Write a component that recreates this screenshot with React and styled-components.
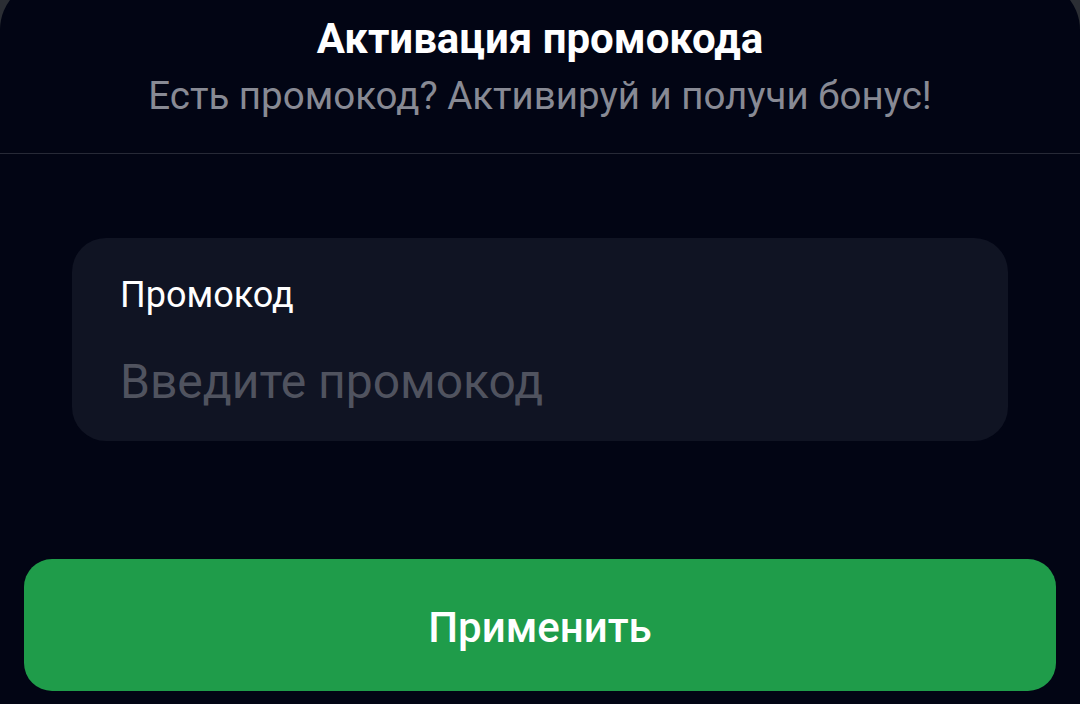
import React, { useState } from 'react'
import styled, { createGlobalStyle } from 'styled-components'

const GlobalStyle = createGlobalStyle`
  html, body {
    margin: 0;
    padding: 0;
    background: #2b2e34;
    font-family: Roboto, "Liberation Sans", sans-serif;
    overflow: hidden;
  }
  * {
    box-sizing: border-box;
  }
`

const Sheet = styled.div`
  margin-top: -20px;
  padding-top: 34px;
  min-height: 724px;
  background: #020514;
  border-radius: 50px 50px 0 0;
  display: flex;
  flex-direction: column;
`

const Header = styled.header`
  display: flex;
  flex-direction: column;
  align-items: center;
  gap: 10px;
  padding-bottom: 35px;
  border-bottom: 1px solid #272a37;
`

const Title = styled.h1`
  margin: 0;
  font-size: 42px;
  line-height: 50px;
  font-weight: 700;
  color: #ffffff;
`

const Subtitle = styled.p`
  margin: 0;
  font-size: 38.5px;
  line-height: 44px;
  font-weight: 400;
  color: #888a94;
`

const Body = styled.div`
  display: flex;
  flex-direction: column;
  padding: 84px 24px 0;
`

const Field = styled.label`
  display: flex;
  flex-direction: column;
  gap: 38px;
  margin: 0 48px;
  padding: 36px 48px 31px;
  background: #101423;
  border-radius: 34px;
`

const FieldLabel = styled.span`
  font-size: 36px;
  line-height: 42px;
  color: #ffffff;
`

const Input = styled.input`
  font: inherit;
  font-size: 48px;
  line-height: 56px;
  height: 56px;
  padding: 0;
  border: none;
  background: transparent;
  color: #ffffff;
  outline: none;

  &::placeholder {
    color: #50535f;
  }
`

const ApplyButton = styled.button`
  margin-top: 118px;
  height: 132px;
  padding: 4px 0 0;
  border: none;
  border-radius: 28px;
  background: #1f9c4a;
  color: #ffffff;
  font-family: inherit;
  font-size: 42px;
  font-weight: 500;
  cursor: pointer;
`

const App = () => {
  const [code, setCode] = useState('')

  return (
    <>
      <GlobalStyle />
      <Sheet>
        <Header>
          <Title>Активация промокода</Title>
          <Subtitle>Есть промокод? Активируй и получи бонус!</Subtitle>
        </Header>
        <Body>
          <Field>
            <FieldLabel>Промокод</FieldLabel>
            <Input
              value={code}
              onChange={e => setCode(e.target.value)}
              placeholder="Введите промокод"
            />
          </Field>
          <ApplyButton>Применить</ApplyButton>
        </Body>
      </Sheet>
    </>
  )
}

export default App
